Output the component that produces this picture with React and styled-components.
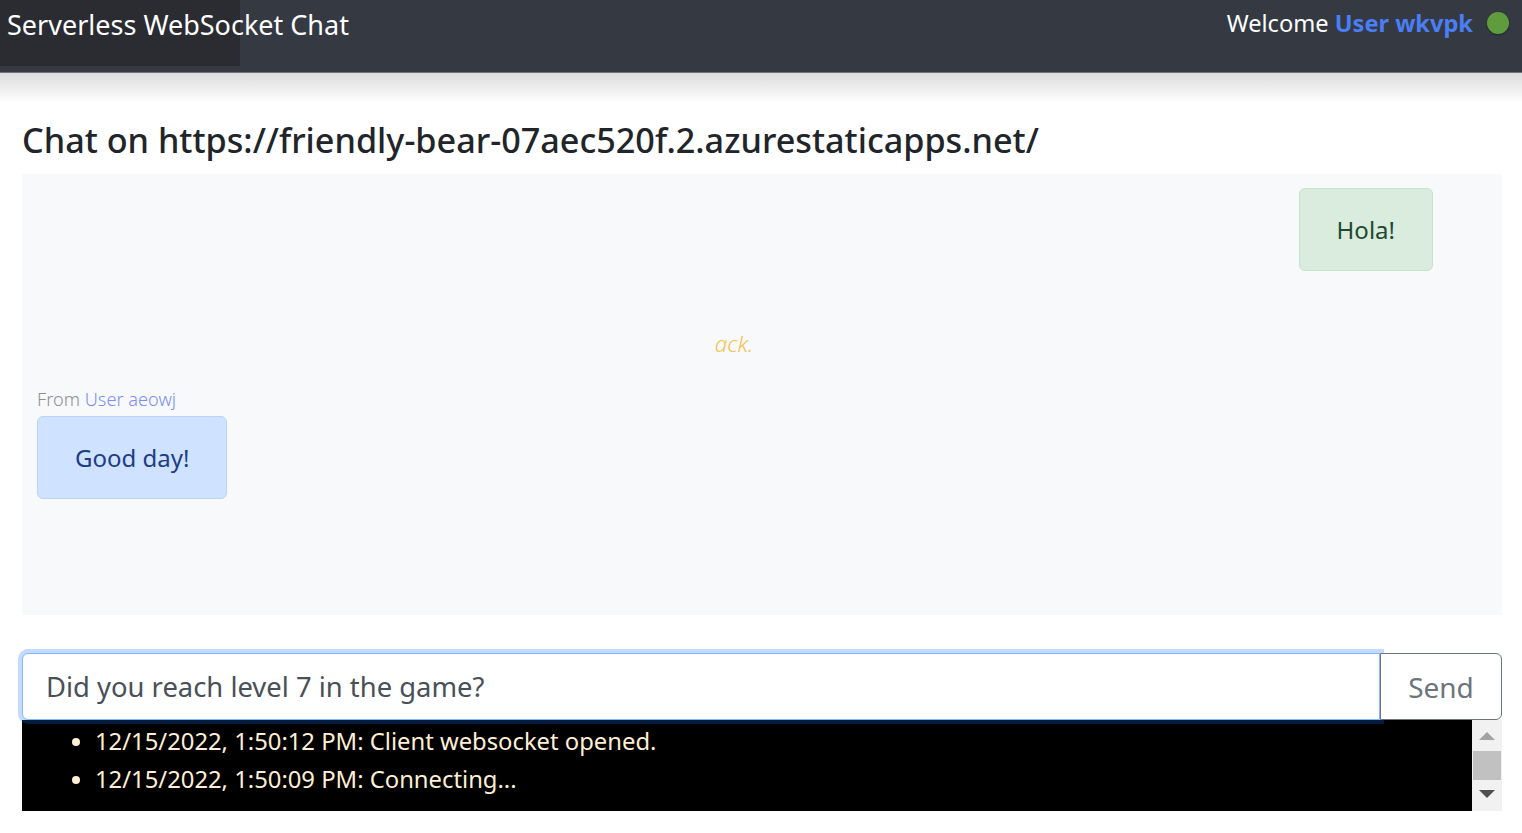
import React from "react"
import styled, { createGlobalStyle } from "styled-components"

const GlobalStyle = createGlobalStyle`
  body {
    margin: 0;
    background: #fff;
    font-family: "Noto Sans", "Open Sans", sans-serif;
    color: #212529;
  }
`

const Header = styled.header`
  display: flex;
  align-items: flex-start;
  height: 72px;
  background: #353a42;
  border-bottom: 1px solid #6f7277;
`

const Brand = styled.div`
  width: 240px;
  height: 66px;
  box-sizing: border-box;
  padding: 6px 0 0 7px;
  background: #2a2c31;
  color: #fff;
  font-size: 27px;
  line-height: 38px;
  white-space: nowrap;
`

const UserBox = styled.div`
  margin-left: auto;
  display: flex;
  align-items: center;
  gap: 14px;
  height: 46px;
  padding-right: 13px;
  color: #fff;
  font-size: 23.6px;
`

const UserName = styled.span`
  color: #4a7ef5;
  font-weight: 700;
`

const Status = styled.span`
  width: 22px;
  height: 22px;
  border-radius: 50%;
  background: #5e9c3d;
  box-shadow: 0 1px 2px rgba(0, 0, 0, 0.35);
`

const Shade = styled.div`
  height: 30px;
  background: linear-gradient(#dcdcdc, #fff);
`

const Main = styled.main`
  padding: 0 20px 0 22px;
`

const Title = styled.h2`
  margin: 16px 0 14px;
  font-size: 34.2px;
  font-weight: 500;
  line-height: 41px;
  color: #212529;
  white-space: nowrap;
`

const ChatBox = styled.section`
  height: 441px;
  box-sizing: border-box;
  padding: 14px 15px;
  background: #f8f9fa;
  display: flex;
  flex-direction: column;
`

const Row = styled.div`
  display: flex;
  justify-content: ${p => (p.$mine ? "flex-end" : "flex-start")};
  padding-right: ${p => (p.$mine ? "54px" : "0")};
`

const Bubble = styled.div`
  height: 83px;
  box-sizing: border-box;
  padding: 0 37px;
  display: flex;
  align-items: center;
  border-radius: 6px;
  font-size: 24px;
  border: 1px solid ${p => (p.$mine ? "#c3e4cd" : "#b6d4fe")};
  background: ${p => (p.$mine ? "#d9ecdd" : "#cfe2ff")};
  color: ${p => (p.$mine ? "#1d4a2e" : "#203c84")};
`

const Ack = styled.div`
  margin-top: 58px;
  padding-right: 56px;
  text-align: center;
  font-size: 22.5px;
  line-height: 30px;
  font-style: italic;
  font-weight: 300;
  color: #f4c250;
`

const From = styled.div`
  margin: 28px 0 5px;
  font-size: 18.2px;
  line-height: 24px;
  font-weight: 300;
  color: #8b9095;

  span {
    color: #7d8cf6;
  }
`

const SendForm = styled.form`
  display: flex;
  margin-top: 38px;
  position: relative;
  z-index: 1;
`

const Input = styled.input`
  flex: 1;
  min-width: 0;
  height: 67px;
  box-sizing: border-box;
  padding: 0 23px;
  border: 1px solid #86b7fe;
  border-radius: 6px 0 0 6px;
  box-shadow: 0 0 0 4px rgba(13, 110, 253, 0.25);
  font-family: inherit;
  font-size: 27.4px;
  color: #495057;
  caret-color: #212529;
  outline: none;
`

const SendButton = styled.button`
  width: 122px;
  height: 67px;
  border: 1px solid #6c757d;
  border-radius: 0 6px 6px 0;
  background: #fff;
  color: #6c757d;
  font-family: inherit;
  font-size: 28px;
`

const Log = styled.div`
  display: flex;
  height: 91px;
  background: #000;
`

const LogList = styled.ul`
  flex: 1;
  margin: 0;
  padding: 2px 0 0 73px;
  overflow: hidden;
  color: #ffefd5;
  font-size: 23.8px;
  line-height: 38px;
`

const Scrollbar = styled.div`
  width: 30px;
  background: #f1f1f1;
  display: flex;
  flex-direction: column;
  align-items: center;
`

const Arrow = styled.div`
  width: 0;
  height: 0;
  border-left: 8px solid transparent;
  border-right: 8px solid transparent;
  ${p =>
    p.$down
      ? "border-top: 8px solid #505050; margin-top: 10px;"
      : "border-bottom: 8px solid #a3a3a3; margin-top: 12px;"}
`

const Thumb = styled.div`
  align-self: stretch;
  margin: 11px 1px 0;
  height: 29px;
  background: #c1c1c1;
`

const logs = [
  "12/15/2022, 1:50:12 PM: Client websocket opened.",
  "12/15/2022, 1:50:09 PM: Connecting...",
]

const App = () => {
  return (
    <>
      <GlobalStyle />
      <Header>
        <Brand>Serverless WebSocket Chat</Brand>
        <UserBox>
          <span>
            Welcome <UserName>User wkvpk</UserName>
          </span>
          <Status />
        </UserBox>
      </Header>
      <Shade />
      <Main>
        <Title>Chat on https://friendly-bear-07aec520f.2.azurestaticapps.net/</Title>
        <ChatBox>
          <Row $mine>
            <Bubble $mine>Hola!</Bubble>
          </Row>
          <Ack>ack.</Ack>
          <From>
            From <span>User aeowj</span>
          </From>
          <Row>
            <Bubble>Good day!</Bubble>
          </Row>
        </ChatBox>
        <SendForm onSubmit={e => e.preventDefault()}>
          <Input defaultValue="Did you reach level 7 in the game?" />
          <SendButton type="submit">Send</SendButton>
        </SendForm>
        <Log>
          <LogList>
            {logs.map(line => (
              <li key={line}>{line}</li>
            ))}
          </LogList>
          <Scrollbar>
            <Arrow />
            <Thumb />
            <Arrow $down />
          </Scrollbar>
        </Log>
      </Main>
    </>
  )
}

export default App
